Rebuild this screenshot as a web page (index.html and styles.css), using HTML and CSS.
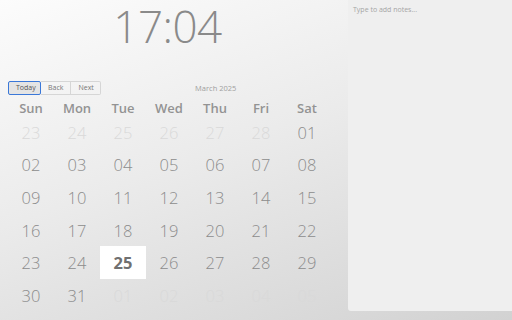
FILE: index.html
```html
<!DOCTYPE html>
<html>
<head>
<meta charset="utf-8">
<link rel="stylesheet" href="styles.css">
</head>
<body>
<div class="page">
  <div class="left">
    <div class="clock">17:04</div>
    <div class="toolbar">
      <div class="btn-group">
        <button class="btn active">Today</button><button class="btn">Back</button><button class="btn">Next</button>
      </div>
      <div class="label">March 2025</div>
    </div>
    <div class="grid">
      <div class="wd">Sun</div><div class="wd">Mon</div><div class="wd">Tue</div><div class="wd">Wed</div><div class="wd">Thu</div><div class="wd">Fri</div><div class="wd">Sat</div>
      <div class="d off">23</div><div class="d off">24</div><div class="d off">25</div><div class="d off">26</div><div class="d off">27</div><div class="d off">28</div><div class="d">01</div>
      <div class="d">02</div><div class="d">03</div><div class="d">04</div><div class="d">05</div><div class="d">06</div><div class="d">07</div><div class="d">08</div>
      <div class="d">09</div><div class="d">10</div><div class="d">11</div><div class="d">12</div><div class="d">13</div><div class="d">14</div><div class="d">15</div>
      <div class="d">16</div><div class="d">17</div><div class="d">18</div><div class="d">19</div><div class="d">20</div><div class="d">21</div><div class="d">22</div>
      <div class="d">23</div><div class="d">24</div><div class="d today">25</div><div class="d">26</div><div class="d">27</div><div class="d">28</div><div class="d">29</div>
      <div class="d">30</div><div class="d">31</div><div class="d off">01</div><div class="d off">02</div><div class="d off">03</div><div class="d off">04</div><div class="d off">05</div>
    </div>
  </div>
  <div class="notes">
    <textarea class="notes-input" placeholder="Type to add notes..."></textarea>
  </div>
</div>
</body>
</html>
```
FILE: styles.css
```css
html, body {
  margin: 0;
  padding: 0;
  width: 512px;
  height: 320px;
  overflow: hidden;
}
body {
  background: linear-gradient(160deg, #fcfcfc 0%, #ebebeb 45%, #d2d2d2 100%);
  font-family: "Open Sans", sans-serif;
}
.page {
  display: flex;
  height: 320px;
}
.left {
  width: 322px;
  margin-left: 8px;
  display: flex;
  flex-direction: column;
}
.clock {
  height: 52px;
  text-align: center;
  font-size: 44px;
  font-weight: 300;
  color: #8a8a8a;
  line-height: 52px;
  letter-spacing: -0.5px;
  padding-right: 3px;
}
.toolbar {
  margin-top: 29px;
  display: flex;
  align-items: center;
  height: 14px;
}
.btn-group {
  display: flex;
}
.btn {
  font-family: "Open Sans", sans-serif;
  font-size: 7px;
  color: #777;
  background: transparent;
  border: 1px solid #d6d6d6;
  height: 14px;
  padding: 0 7px;
  margin: 0;
  line-height: 12px;
}
.btn + .btn { border-left: none; }
.btn:first-child { border-radius: 2px 0 0 2px; }
.btn:last-child { border-radius: 0 2px 2px 0; width: 30px; }
.btn.active {
  background: #e4e4e4;
  border: 1px solid #3b78d8;
  border-radius: 2px;
  color: #555;
  width: 33px;
}
.label {
  flex: 1;
  text-align: center;
  font-size: 7.5px;
  color: #a0a0a0;
}
.grid {
  margin-top: 5px;
  display: grid;
  grid-template-columns: repeat(7, 1fr);
  grid-template-rows: 16px repeat(6, 32.6px);
}
.wd {
  text-align: center;
  font-weight: 600;
  font-size: 13px;
  line-height: 16px;
  color: #939393;
}
.d {
  display: flex;
  align-items: center;
  justify-content: center;
  font-size: 16.5px;
  font-weight: 300;
  color: #8c8c8c;
}
.d.off {
  color: #d9d9d9;
}
.d.today {
  background: #fff;
  font-weight: 700;
  color: #707070;
}
.notes {
  margin-left: auto;
  width: 164px;
  height: 311px;
  background: #efefef;
  border-radius: 0 0 0 3px;
  display: flex;
}
.notes-input {
  flex: 1;
  border: none;
  background: transparent;
  resize: none;
  outline: none;
  padding: 5px;
  font-family: "Open Sans", sans-serif;
  font-size: 7px;
  color: #888;
}
.notes-input::placeholder {
  color: #a5a5a5;
}
```
